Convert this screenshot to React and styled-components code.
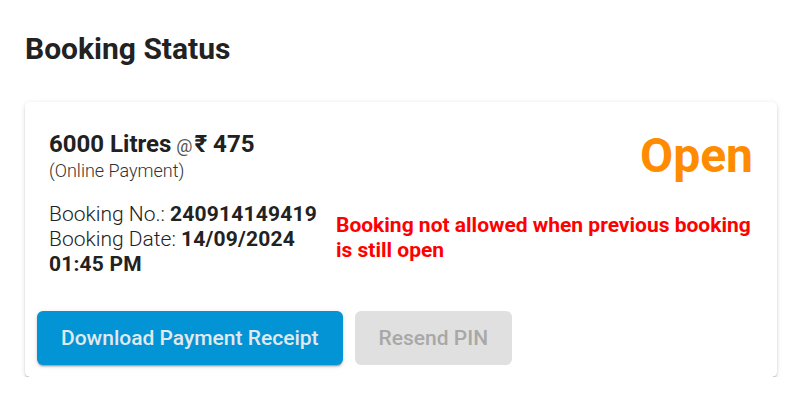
import React from "react";
import styled, { createGlobalStyle } from "styled-components";

const GlobalStyle = createGlobalStyle`
  body {
    margin: 0;
    background: #ffffff;
    font-family: Roboto, "Liberation Sans", sans-serif;
    color: #212121;
  }
`;

const Page = styled.div`
  padding: 31px 23px 0 25px;
`;

const Title = styled.h1`
  margin: 0 0 35px;
  font-size: 30px;
  line-height: 36px;
  font-weight: 700;
  color: #222222;
`;

const Card = styled.section`
  background: #fff;
  border-radius: 5px;
  box-shadow: 0 3px 1px -2px rgba(0, 0, 0, 0.2), 0 2px 2px 0 rgba(0, 0, 0, 0.14),
    0 1px 5px 0 rgba(0, 0, 0, 0.12);
`;

const Content = styled.div`
  padding: 28px 24px 0;
  display: grid;
  grid-template-columns: auto 1fr;
  column-gap: 19px;
`;

const Left = styled.div`
  display: flex;
  flex-direction: column;
`;

const Right = styled.div`
  display: flex;
  flex-direction: column;
  align-items: flex-start;
`;

const Quantity = styled.div`
  font-size: 24px;
  line-height: 28px;
  font-weight: 700;
`;

const At = styled.span`
  font-size: 18px;
  font-weight: 400;
  color: #555;
  margin: 0 2px 0 5px;
`;

const Mode = styled.div`
  font-size: 18px;
  line-height: 22px;
  font-weight: 300;
  color: #333;
`;

const Details = styled.div`
  margin-top: 20px;
  font-size: 21px;
  line-height: 25px;
  font-weight: 300;
  color: #222;

  strong {
    font-weight: 700;
    letter-spacing: 0.2px;
  }
`;

const Status = styled.div`
  align-self: flex-end;
  font-size: 48px;
  line-height: 51px;
  font-weight: 700;
  color: #ff8c00;
`;

const Warning = styled.p`
  margin: 32px 0 0;
  font-size: 21px;
  line-height: 25px;
  font-weight: 700;
  color: #ff0000;
`;

const Actions = styled.div`
  display: flex;
  gap: 12px;
  padding: 34px 12px 12px;
`;

const Button = styled.button`
  height: 54px;
  padding: 0 24px;
  border: 0;
  border-radius: 6px;
  font-family: inherit;
  font-size: 21px;
  font-weight: 500;
  background: ${(p) => (p.$disabled ? "#e0e0e0" : "#0294d5")};
  color: ${(p) => (p.$disabled ? "#a8a8a8" : "#e3e8ec")};
  box-shadow: ${(p) =>
    p.$disabled
      ? "none"
      : "0 3px 1px -2px rgba(0,0,0,0.2), 0 2px 2px 0 rgba(0,0,0,0.14), 0 1px 5px 0 rgba(0,0,0,0.12)"};
`;

export default function App() {
  return (
    <>
      <GlobalStyle />
      <Page>
        <Title>Booking Status</Title>
        <Card>
          <Content>
            <Left>
              <Quantity>
                6000 Litres<At>@</At>₹ 475
              </Quantity>
              <Mode>(Online Payment)</Mode>
              <Details>
                Booking No.: <strong>240914149419</strong>
                <br />
                Booking Date: <strong>14/09/2024</strong>
                <br />
                <strong>01:45 PM</strong>
              </Details>
            </Left>
            <Right>
              <Status>Open</Status>
              <Warning>
                Booking not allowed when previous booking is still open
              </Warning>
            </Right>
          </Content>
          <Actions>
            <Button>Download Payment Receipt</Button>
            <Button $disabled>Resend PIN</Button>
          </Actions>
        </Card>
      </Page>
    </>
  );
}
